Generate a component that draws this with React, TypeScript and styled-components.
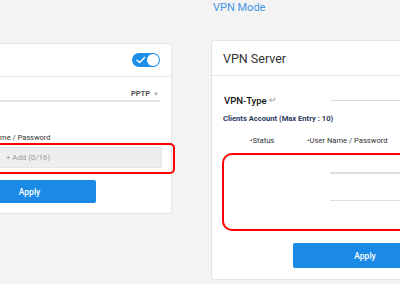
import React from "react";
import styled, { createGlobalStyle } from "styled-components";

const Global = createGlobalStyle`
  html, body { margin: 0; padding: 0; background: #f3f3f3; }
  body { width: 400px; height: 284px; overflow: hidden; font-family: Roboto, "Liberation Sans", Arial, sans-serif; }
`;

const Page = styled.div`
  display: flex;
  align-items: flex-start;
  gap: 39px;
  margin-left: -50px;
  width: 700px;
`;

const LeftColumn = styled.div`
  padding-top: 43px;
  flex: 0 0 222px;
`;

const RightColumn = styled.div`
  flex: 0 0 240px;
  display: flex;
  flex-direction: column;
`;

const ModeTitle = styled.div`
  font-size: 11px;
  line-height: 16px;
  color: #4596e6;
  padding-left: 2px;
  height: 16px;
  margin-bottom: 24px;
`;

const Card = styled.div`
  background: #fff;
  border: 1px solid #e3e3e3;
  border-radius: 3px;
  box-sizing: border-box;
`;

const CardHeader = styled.div<{ $h: number }>`
  height: ${(p) => p.$h}px;
  box-sizing: border-box;
  border-bottom: 1px solid #e6e6e6;
  display: flex;
  align-items: center;
  padding: 0 11px 0 11px;
`;

const HeaderTitle = styled.div`
  font-size: 12.5px;
  color: #333;
`;

const Toggle = styled.div`
  margin-left: auto;
  width: 28px;
  height: 14px;
  border-radius: 7px;
  background: #1e8fe8;
  position: relative;
  display: flex;
  align-items: center;
`;

const Knob = styled.div`
  position: absolute;
  right: 1px;
  top: 1px;
  width: 12px;
  height: 12px;
  border-radius: 50%;
  background: #fff;
`;

const Body = styled.div<{ $pad: string }>`
  padding: ${(p) => p.$pad};
  display: flex;
  flex-direction: column;
`;

const SelectRow = styled.div`
  margin-top: 9px;
  height: 14px;
  border-bottom: 2px solid #e2e2e2;
  display: flex;
  align-items: center;
  justify-content: flex-end;
  gap: 3px;
  font-size: 7.5px;
  font-weight: 700;
  color: #555;
  padding-right: 1px;
`;

const Caret = styled.span`
  font-size: 6px;
  color: #aaa;
  font-weight: 400;
`;

const ColLabel = styled.div<{ $left: number }>`
  font-size: 7.5px;
  line-height: 10px;
  color: #333;
  padding-left: ${(p) => p.$left}px;
`;

const Annotation = styled.div<{ $radius: number }>`
  border: 2.6px solid #ff0000;
  border-radius: ${(p) => p.$radius}px;
  box-sizing: border-box;
`;

const LeftAnnotation = styled(Annotation)`
  margin-top: 0px;
  margin-right: -15px;
  padding: 2px 11px 1px 0;
  height: 31px;
  margin-left: -20px;
  padding-left: 18px;
`;

const AddField = styled.div`
  height: 21px;
  background: #eeeeee;
  border: 1px solid #e6e6e6;
  box-sizing: border-box;
  display: flex;
  align-items: center;
  padding-left: 42px;
  font-size: 7.8px;
  color: #9a9a9a;
`;

const ApplyButton = styled.button<{ $w: number; $h: number; $left: number }>`
  width: ${(p) => p.$w}px;
  height: ${(p) => p.$h}px;
  margin-left: ${(p) => p.$left}px;
  background: #1a8ae6;
  border: none;
  border-radius: 2px;
  color: #fff;
  font-family: Roboto, "Liberation Sans", Arial, sans-serif;
  font-size: 8.5px;
  font-weight: 500;
  padding: 0;
`;

const TypeRow = styled.div`
  margin-top: 17px;
  height: 14px;
  display: grid;
  grid-template-columns: 107px 1fr;
  align-items: center;
  padding-left: 1px;
`;

const TypeLabel = styled.div`
  font-size: 9.5px;
  font-weight: 500;
  color: #111;
  display: flex;
  align-items: center;
  gap: 2px;
`;

const Return = styled.span`
  font-size: 8.5px;
  color: #999;
  font-weight: 400;
`;

const Line = styled.div`
  height: 1px;
  background: #d8d8d8;
`;

const SectionTitle = styled.div`
  margin-top: 7px;
  font-size: 7.6px;
  line-height: 10px;
  font-weight: 700;
  color: #2b3b5e;
`;

const HeadRow = styled.div`
  margin-top: 12px;
  display: flex;
  font-size: 7.6px;
  line-height: 10px;
  color: #333;
  padding-left: 27px;
`;

const HeadCell = styled.span<{ $w?: number }>`
  width: ${(p) => (p.$w ? `${p.$w}px` : "auto")};
`;

const RightAnnotation = styled(Annotation)`
  margin-top: 7px;
  margin-left: -1px;
  height: 78px;
  margin-right: -30px;
  padding: 15px 0 0 106px;
  display: flex;
  flex-direction: column;
  gap: 24px;
`;

const ClientLine = styled.div`
  height: 1.5px;
  background: #dedede;
  margin-top: 2px;
`;

export default function App() {
  return (
    <>
      <Global />
      <Page>
        <LeftColumn>
          <Card>
            <CardHeader $h={33}>
              <Toggle>
                <svg width="10" height="8" viewBox="0 0 10 8" style={{ marginLeft: 4 }}>
                  <path d="M1 4.2 L3.6 6.6 L8.6 1.6" fill="none" stroke="#fff" strokeWidth="1.4" strokeLinecap="round" strokeLinejoin="round" />
                </svg>
                <Knob />
              </Toggle>
            </CardHeader>
            <Body $pad="0 11px 10px 12px">
              <SelectRow>
                PPTP <Caret>▼</Caret>
              </SelectRow>
              <ColLabel $left={8} style={{ marginTop: 31 }}>
                •User Name / Password
              </ColLabel>
              <LeftAnnotation $radius={5}>
                <AddField>+ Add (0/16)</AddField>
              </LeftAnnotation>
              <ApplyButton $w={133} $h={23} $left={0} style={{ marginTop: 6 }}>
                Apply
              </ApplyButton>
            </Body>
          </Card>
        </LeftColumn>
        <RightColumn>
          <ModeTitle>VPN Mode</ModeTitle>
          <Card>
            <CardHeader $h={35}>
              <HeaderTitle>VPN Server</HeaderTitle>
            </CardHeader>
            <Body $pad="0 0 11px 11px">
              <TypeRow>
                <TypeLabel>
                  VPN-Type <Return>↵</Return>
                </TypeLabel>
                <Line />
              </TypeRow>
              <SectionTitle>Clients Account (Max Entry : 10)</SectionTitle>
              <HeadRow>
                <HeadCell $w={57}>•Status</HeadCell>
                <HeadCell>•User Name / Password</HeadCell>
              </HeadRow>
              <RightAnnotation $radius={10}>
                <ClientLine />
                <ClientLine />
              </RightAnnotation>
              <ApplyButton $w={144} $h={25} $left={70} style={{ marginTop: 12 }}>
                Apply
              </ApplyButton>
            </Body>
          </Card>
        </RightColumn>
      </Page>
    </>
  );
}
